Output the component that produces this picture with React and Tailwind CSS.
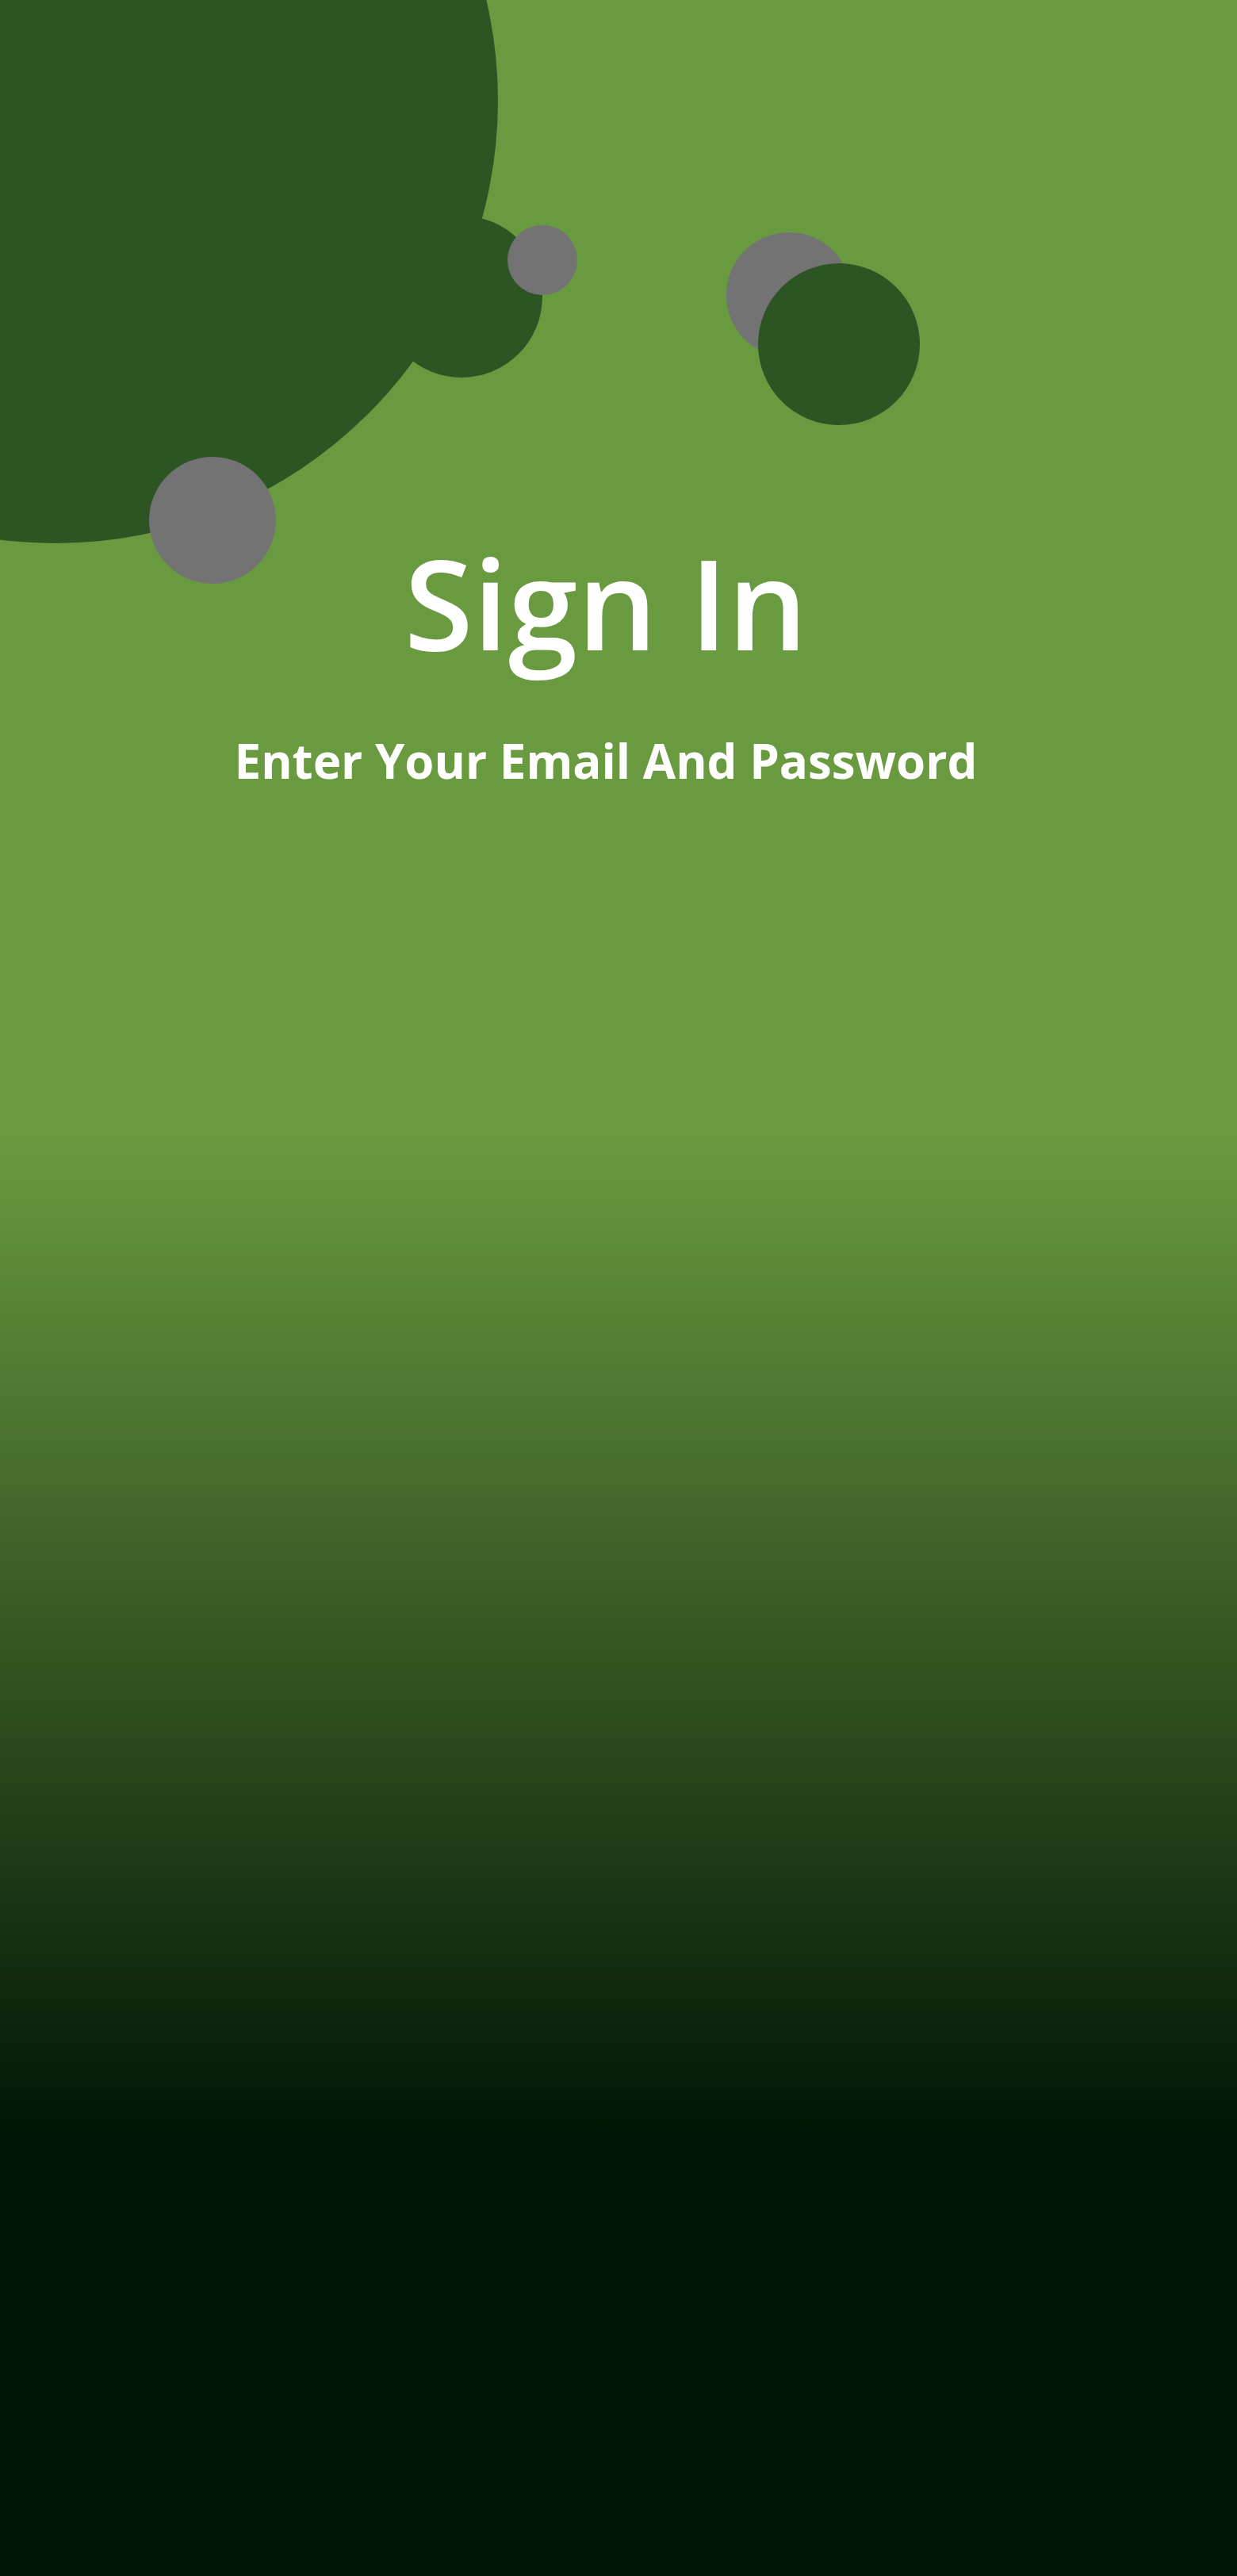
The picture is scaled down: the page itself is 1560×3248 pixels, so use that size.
const bubbles = [
  { key: 'big', className: 'left-[-488px] top-[-431px] h-[1116px] w-[1116px] bg-[#2d5524]' },
  { key: 'mid', className: 'left-[480px] top-[272px] h-[204px] w-[204px] bg-[#2d5524]' },
  { key: 'dot', className: 'left-[640px] top-[284px] h-[88px] w-[88px] bg-[#737373]' },
  { key: 'low', className: 'left-[188px] top-[576px] h-[160px] w-[160px] bg-[#737373]' },
  { key: 'grayRight', className: 'left-[916px] top-[293px] h-[158px] w-[158px] bg-[#737373]' },
  { key: 'darkRight', className: 'left-[956px] top-[332px] h-[204px] w-[204px] bg-[#2d5524]' },
]

function SignIn() {
  return (
    <div className="relative h-[3248px] w-full overflow-hidden bg-[linear-gradient(180deg,#6a9a40_44%,#001505_83%)] font-['Open_Sans',sans-serif] text-white">
      {bubbles.map((b) => (
        <span key={b.key} className={`absolute rounded-full ${b.className}`} />
      ))}

      <div className="relative flex flex-col items-center pr-8 pt-[680px]">
        <h1 className="text-[158px] font-semibold leading-none">Sign In</h1>
        <p className="mt-[91px] text-[60px] font-bold leading-none">Enter Your Email And Password</p>
      </div>
    </div>
  )
}

export default function App() {
  return <SignIn />
}
